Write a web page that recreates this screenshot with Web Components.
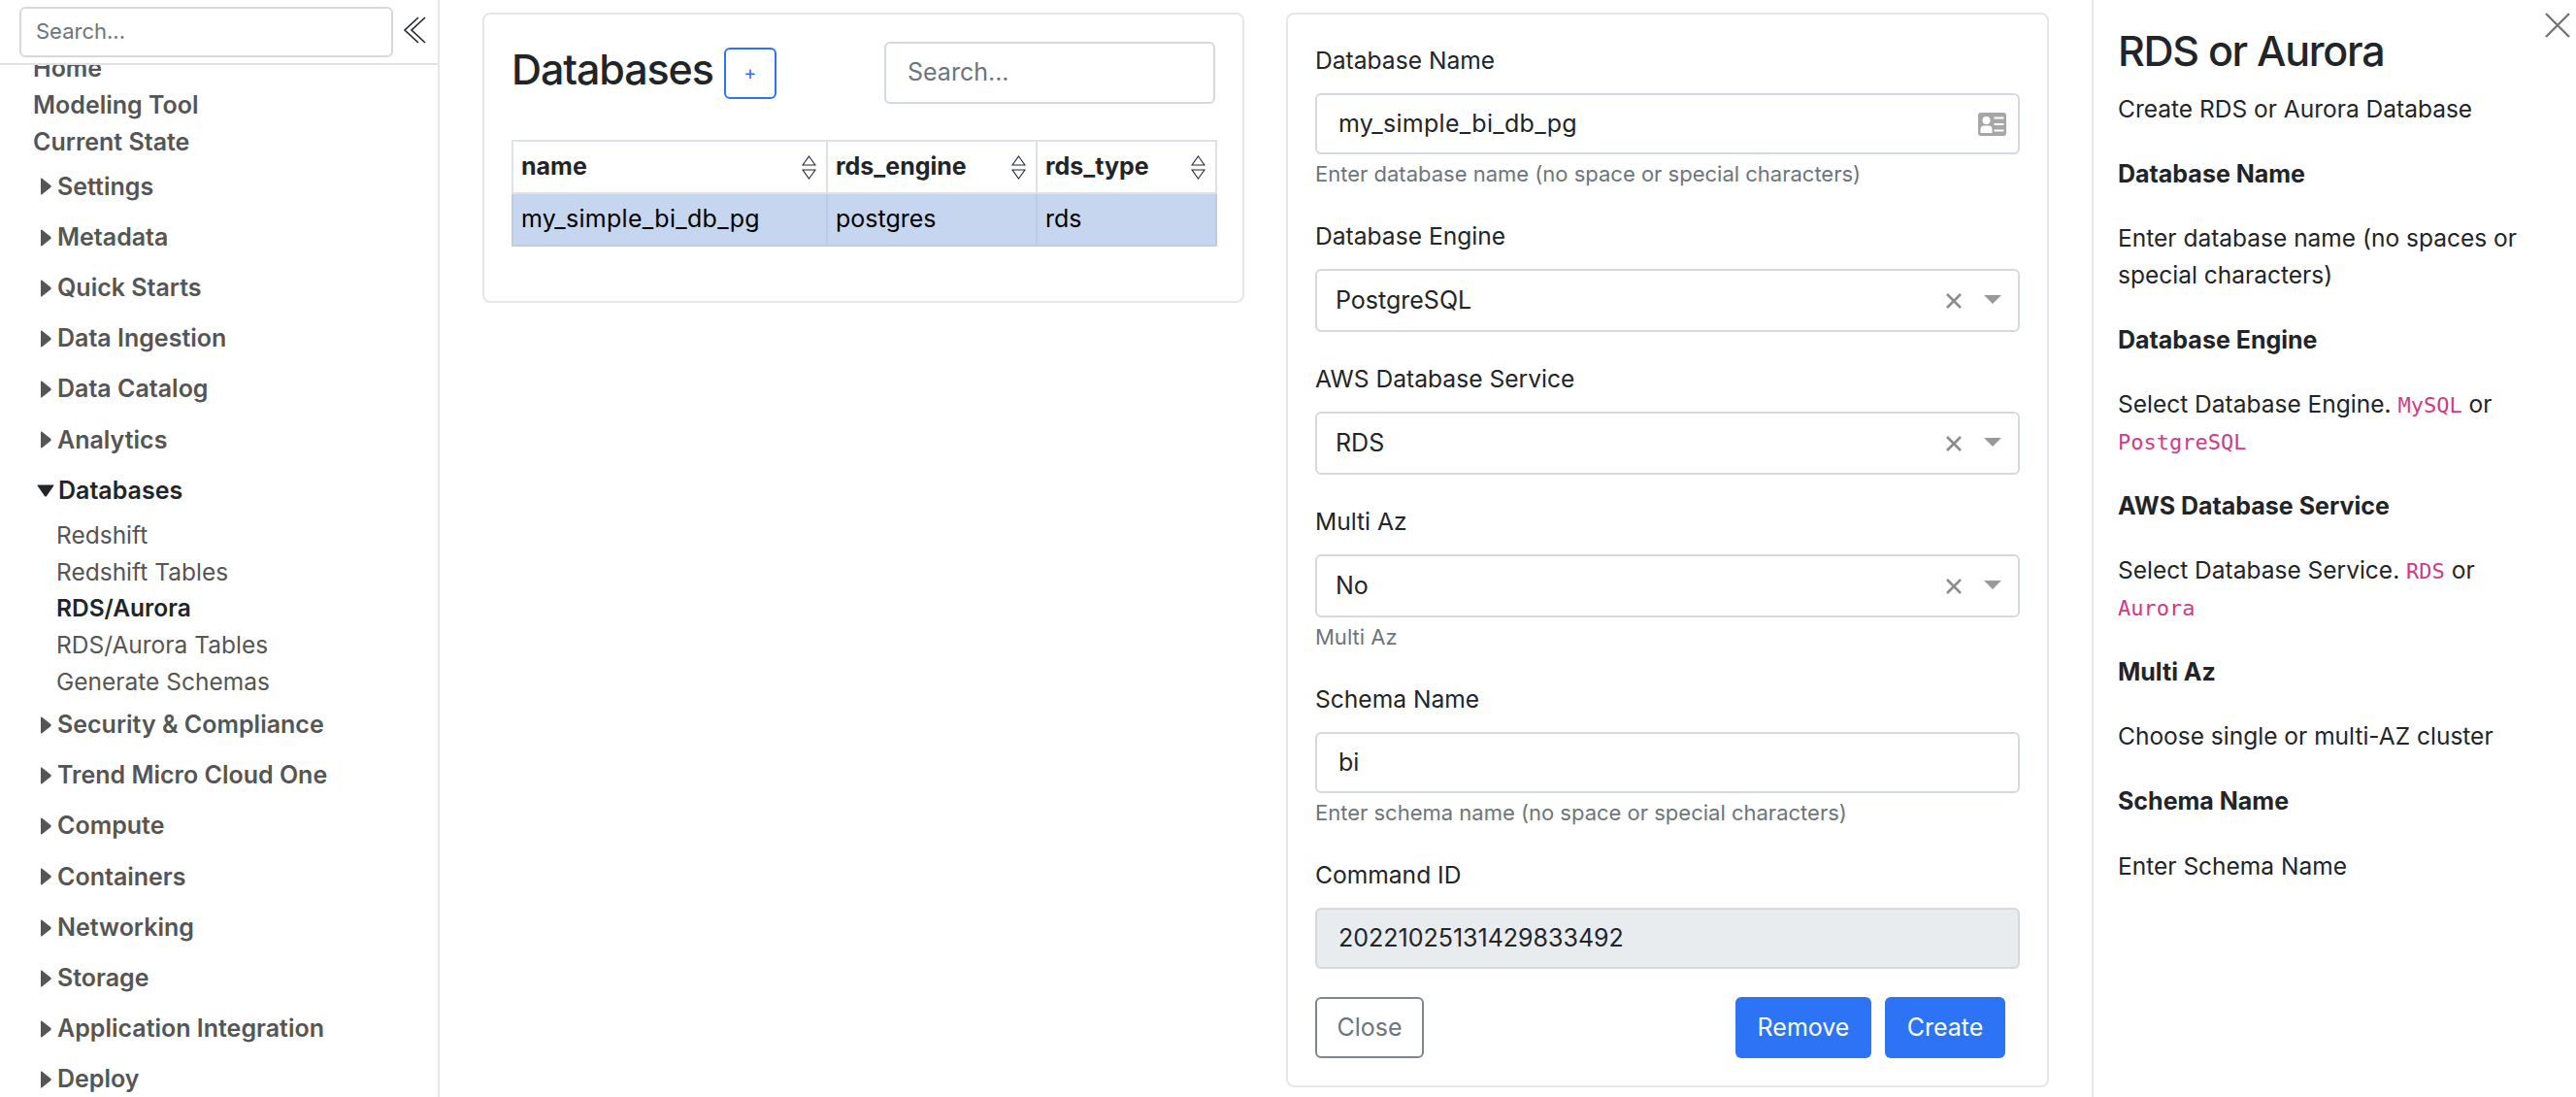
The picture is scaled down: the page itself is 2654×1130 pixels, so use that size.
<!DOCTYPE html>
<html>
<head>
<meta charset="utf-8">
<title>RDS or Aurora</title>
<style>
  html, body { margin: 0; height: 1130px; overflow: hidden; background: #fff; }
  body { font-family: Inter, "Liberation Sans", sans-serif; font-size: 25px; line-height: 37.6px; color: #212529; }
</style>
</head>
<body>
<app-shell>
  <side-nav slot="nav">
    <side-link>Home</side-link>
    <side-link>Modeling Tool</side-link>
    <side-link>Current State</side-link>
    <side-group first>Settings</side-group>
    <side-group>Metadata</side-group>
    <side-group>Quick Starts</side-group>
    <side-group>Data Ingestion</side-group>
    <side-group>Data Catalog</side-group>
    <side-group>Analytics</side-group>
    <side-group open>Databases
      <sub-link slot="items">Redshift</sub-link>
      <sub-link slot="items">Redshift Tables</sub-link>
      <sub-link slot="items" active>RDS/Aurora</sub-link>
      <sub-link slot="items">RDS/Aurora Tables</sub-link>
      <sub-link slot="items">Generate Schemas</sub-link>
    </side-group>
    <side-group>Security &amp; Compliance</side-group>
    <side-group>Trend Micro Cloud One</side-group>
    <side-group>Compute</side-group>
    <side-group>Containers</side-group>
    <side-group>Networking</side-group>
    <side-group>Storage</side-group>
    <side-group>Application Integration</side-group>
    <side-group>Deploy</side-group>
  </side-nav>
  <database-list slot="list"></database-list>
  <database-form slot="form">
    <form-field label="Database Name" value="my_simple_bi_db_pg" help="Enter database name (no space or special characters)" card></form-field>
    <select-field label="Database Engine" value="PostgreSQL"></select-field>
    <select-field label="AWS Database Service" value="RDS"></select-field>
    <select-field label="Multi Az" value="No" help="Multi Az"></select-field>
    <form-field label="Schema Name" value="bi" help="Enter schema name (no space or special characters)"></form-field>
    <form-field label="Command ID" value="20221025131429833492" disabled></form-field>
    <ui-button slot="left" kind="outline" style="width:112px">Close</ui-button>
    <ui-button slot="right" style="width:140px">Remove</ui-button>
    <ui-button slot="right" style="width:124px">Create</ui-button>
  </database-form>
  <help-panel slot="help"></help-panel>
</app-shell>

<script>
class AppShell extends HTMLElement {
  connectedCallback() {
    this.attachShadow({ mode: 'open' });
    this.shadowRoot.innerHTML = `
      <style>
        :host { display: grid; grid-template-columns: 453px 1702px 499px; height: 1130px; overflow: hidden; }
        .main { display: grid; grid-template-columns: 785px 786px; gap: 43px; padding: 13px 44px 0; align-items: start; }
      </style>
      <slot name="nav"></slot>
      <div class="main">
        <slot name="list"></slot>
        <slot name="form"></slot>
      </div>
      <slot name="help"></slot>
    `;
  }
}

class SideNav extends HTMLElement {
  connectedCallback() {
    this.attachShadow({ mode: 'open' });
    this.shadowRoot.innerHTML = `
      <style>
        :host { display: flex; flex-direction: column; height: 1130px; border-right: 2px solid #e3e6ea; box-sizing: border-box; overflow: hidden; }
        .top { display: flex; align-items: flex-start; gap: 10px; height: 67px; padding: 7px 0 0 20px; box-sizing: border-box; border-bottom: 2px solid #dee2e6; flex: none; background: #fff; }
        .search { width: 385px; height: 52px; box-sizing: border-box; border: 2px solid #d4d9de; border-radius: 6px; padding-left: 15px; color: #6c757d; font-size: 22px; line-height: 46px; }
        svg { margin-top: 10px; }
        .scroll { flex: 1; overflow: hidden; }
        .list { margin-top: -15px; }
      </style>
      <div class="top">
        <div class="search">Search...</div>
        <svg width="24" height="28" viewBox="0 0 24 28" fill="none" stroke="#212529" stroke-width="1.6">
          <path d="M16 1 L2 14 L16 27"/><path d="M23 1 L9 14 L23 27"/>
        </svg>
      </div>
      <div class="scroll"><div class="list"><slot></slot></div></div>
    `;
  }
}

class SideLink extends HTMLElement {
  connectedCallback() {
    this.attachShadow({ mode: 'open' });
    this.shadowRoot.innerHTML = `
      <style>
        :host { display: block; padding-left: 34px; font-weight: 600; color: #555; line-height: 37.8px; }
      </style>
      <slot></slot>
    `;
  }
}

class SideGroup extends HTMLElement {
  connectedCallback() {
    const open = this.hasAttribute('open');
    this.attachShadow({ mode: 'open' });
    this.shadowRoot.innerHTML = `
      <style>
        :host { display: block; font-weight: 600; color: ${open ? '#212529' : '#555'}; margin-top: ${this.hasAttribute('first') ? '1px' : '0'}; }
        .head { display: flex; align-items: center; height: 52.2px; padding-left: ${open ? '38px' : '42px'}; }
        svg { flex: none; margin-right: ${open ? '4px' : '6px'}; }
        .items { display: block; margin: 1px 0 -1px; }
      </style>
      <div class="head">
        ${open
          ? '<svg width="18" height="13" viewBox="0 0 18 13"><path d="M1 0.5 H17 Q18 0.5 17.3 1.6 L10 12 Q9 13 8 12 L0.7 1.6 Q0 0.5 1 0.5Z" fill="#212529"/></svg>'
          : '<svg width="11" height="18" viewBox="0 0 11 18"><path d="M0 1.2 Q0 0 1 0.6 L10.4 8 Q11 9 10.4 10 L1 17.4 Q0 18 0 16.8Z" fill="#555"/></svg>'}
        <span><slot></slot></span>
      </div>
      ${open ? '<div class="items"><slot name="items"></slot></div>' : ''}
    `;
  }
}

class SubLink extends HTMLElement {
  connectedCallback() {
    this.attachShadow({ mode: 'open' });
    const active = this.hasAttribute('active');
    this.shadowRoot.innerHTML = `
      <style>
        :host { display: block; padding-left: 58px; font-size: 24.5px; line-height: 37.8px; font-weight: ${active ? 600 : 400}; color: ${active ? '#212529' : '#555'}; }
      </style>
      <slot></slot>
    `;
  }
}

class UiButton extends HTMLElement {
  connectedCallback() {
    const outline = this.getAttribute('kind') === 'outline';
    this.attachShadow({ mode: 'open' });
    this.shadowRoot.innerHTML = `
      <style>
        :host { display: inline-flex; align-items: center; justify-content: center; height: 63px; box-sizing: border-box; border-radius: 6px; font-size: 25px;
          ${outline ? 'border: 2px solid #80868d; color: #6c757d; background: #fff;' : 'background: #2d73f5; color: #fff;'} }
      </style>
      <slot></slot>
    `;
  }
}

class DatabaseList extends HTMLElement {
  connectedCallback() {
    const sortIcon = `<svg class="sort" width="15" height="25" viewBox="0 0 15 25" fill="none" stroke="#212529" stroke-width="1.1"><path d="M7.5 1 L14 10 H1Z"/><path d="M7.5 24 L14 15 H1Z"/></svg>`;
    this.attachShadow({ mode: 'open' });
    this.shadowRoot.innerHTML = `
      <style>
        :host { display: block; box-sizing: border-box; height: 299px; border: 2px solid #e6e7e9; border-radius: 8px; padding: 28px 28px 0 28px; }
        .head { display: flex; align-items: flex-start; }
        h3 { margin: 3px 0 0; font-size: 43px; font-weight: 500; line-height: 50px; letter-spacing: -1.1px; }
        .add { width: 54px; height: 53px; box-sizing: border-box; margin: 6px 0 0 11px; border: 2px solid #2d73f5; border-radius: 6px; color: #2d73f5; font-size: 20px; display: flex; align-items: center; justify-content: center; }
        .search { margin-left: auto; width: 341px; height: 64px; box-sizing: border-box; border: 2px solid #d4d9de; border-radius: 6px; padding-left: 22px; color: #6c757d; line-height: 58px; }
        table { border-collapse: collapse; table-layout: fixed; width: 725px; margin-top: 37px; }
        th, td { height: 54px; padding: 0 8px; border: 2px solid #dee2e6; text-align: left; box-sizing: border-box; }
        th { font-weight: 700; color: #212529; }
        th div { display: flex; justify-content: space-between; align-items: center; }
        .sort { margin-right: 2px; }
        td { background: #c6d6ee; border-color: #bccce4; color: #000; }
        .id { letter-spacing: 0.3px; }
      </style>
      <div class="head">
        <h3>Databases</h3>
        <div class="add">+</div>
        <div class="search">Search...</div>
      </div>
      <table>
        <colgroup><col style="width:324px"><col style="width:216px"><col style="width:185px"></colgroup>
        <thead><tr>
          <th><div>name${sortIcon}</div></th>
          <th><div>rds_engine${sortIcon}</div></th>
          <th><div>rds_type${sortIcon}</div></th>
        </tr></thead>
        <tbody><tr><td class="id">my_simple_bi_db_pg</td><td>postgres</td><td>rds</td></tr></tbody>
      </table>
    `;
  }
}

class DatabaseForm extends HTMLElement {
  connectedCallback() {
    this.attachShadow({ mode: 'open' });
    this.shadowRoot.innerHTML = `
      <style>
        :host { display: block; box-sizing: border-box; height: 1107px; border: 2px solid #e6e7e9; border-radius: 8px; padding: 28px 28px 0 28px; }
        .actions { display: flex; justify-content: space-between; padding-right: 15px; }
        .right { display: flex; gap: 14px; }
      </style>
      <slot></slot>
      <div class="actions">
        <slot name="left"></slot>
        <div class="right"><slot name="right"></slot></div>
      </div>
    `;
  }
}

const fieldStyles = `
  :host { display: block; margin-bottom: 29px; }
  label { display: block; height: 38px; line-height: 38px; margin-bottom: 15px; font-size: 24.6px; }
  .box { position: relative; display: flex; align-items: center; box-sizing: border-box; border: 2px solid #d4d9de; border-radius: 6px; }
  .help { font-size: 22px; line-height: 34px; color: #6c757d; margin-top: 3px; height: 34px; margin-bottom: -1px; }
`;

class FormField extends HTMLElement {
  connectedCallback() {
    const help = this.getAttribute('help');
    const disabled = this.hasAttribute('disabled');
    const value = this.getAttribute('value');
    this.attachShadow({ mode: 'open' });
    this.shadowRoot.innerHTML = `
      <style>
        ${fieldStyles}
        .box { height: 63px; padding-left: 22px; ${disabled ? 'background: #e9ecef;' : ''} ${value.includes('_') ? 'letter-spacing: 0.3px;' : ''} }
        svg { position: absolute; right: 12px; top: 18px; }
      </style>
      <label>${this.getAttribute('label')}</label>
      <div class="box">
        ${value}
        ${this.hasAttribute('card') ? `<svg width="29" height="24" viewBox="0 0 29 24"><rect width="29" height="24" rx="3" fill="#a6a6a6"/><circle cx="8.5" cy="8" r="4" fill="#fff"/><path d="M2.5 21 V17.5 Q2.5 13.5 6 13.5 H11 Q14.5 13.5 14.5 17.5 V21Z" fill="#fff"/><path d="M16.5 5.5 H26.5 M16.5 12 H26.5 M16.5 18.5 H26.5" stroke="#fff" stroke-width="2"/></svg>` : ''}
      </div>
      ${help ? `<div class="help">${help}</div>` : ''}
    `;
  }
}

class SelectField extends HTMLElement {
  connectedCallback() {
    const help = this.getAttribute('help');
    this.attachShadow({ mode: 'open' });
    this.shadowRoot.innerHTML = `
      <style>
        ${fieldStyles}
        .box { height: 65px; padding-left: 19px; }
        .clear { position: absolute; right: 57px; top: 23px; }
        .arrow { position: absolute; right: 17px; top: 25px; }
      </style>
      <label>${this.getAttribute('label')}</label>
      <div class="box">
        ${this.getAttribute('value')}
        <svg class="clear" width="18" height="16" viewBox="0 0 18 16" fill="none" stroke="#8c8c8c" stroke-width="2.6"><path d="M2 1 L16 15 M16 1 L2 15"/></svg>
        <svg class="arrow" width="18" height="9" viewBox="0 0 18 9"><path d="M0 0 H18 L9 9Z" fill="#999"/></svg>
      </div>
      ${help ? `<div class="help">${help}</div>` : ''}
    `;
  }
}

class HelpPanel extends HTMLElement {
  connectedCallback() {
    this.attachShadow({ mode: 'open' });
    this.shadowRoot.innerHTML = `
      <style>
        :host { display: block; position: relative; box-sizing: border-box; height: 1130px; border-left: 2px solid #e3e6ea; padding: 27px 22px 0 25px; font-size: 24.5px; }
        h3 { margin: 0 0 17px; font-size: 43px; font-weight: 500; line-height: 50px; letter-spacing: -1.3px; }
        p { margin: 0 0 29.1px; }
        b { font-weight: 700; font-size: 25px; }
        code { font-family: "DejaVu Sans Mono", "Liberation Mono", monospace; font-size: 22px; line-height: 1; color: #d13a87; }
        svg { position: absolute; right: 6px; top: 13px; }
      </style>
      <svg width="26" height="26" viewBox="0 0 26 26" fill="none" stroke="#757575" stroke-width="2.4"><path d="M1 1 L25 25 M25 1 L1 25"/></svg>
      <h3>RDS or Aurora</h3>
      <p>Create RDS or Aurora Database</p>
      <p><b>Database Name</b></p>
      <p>Enter database name (no spaces or special characters)</p>
      <p><b>Database Engine</b></p>
      <p>Select Database Engine. <code>MySQL</code> or <code>PostgreSQL</code></p>
      <p><b>AWS Database Service</b></p>
      <p>Select Database Service. <code>RDS</code> or <code>Aurora</code></p>
      <p><b>Multi Az</b></p>
      <p>Choose single or multi-AZ cluster</p>
      <p><b>Schema Name</b></p>
      <p>Enter Schema Name</p>
    `;
  }
}

customElements.define('app-shell', AppShell);
customElements.define('side-nav', SideNav);
customElements.define('side-link', SideLink);
customElements.define('side-group', SideGroup);
customElements.define('sub-link', SubLink);
customElements.define('ui-button', UiButton);
customElements.define('database-list', DatabaseList);
customElements.define('database-form', DatabaseForm);
customElements.define('form-field', FormField);
customElements.define('select-field', SelectField);
customElements.define('help-panel', HelpPanel);
</script>
</body>
</html>
